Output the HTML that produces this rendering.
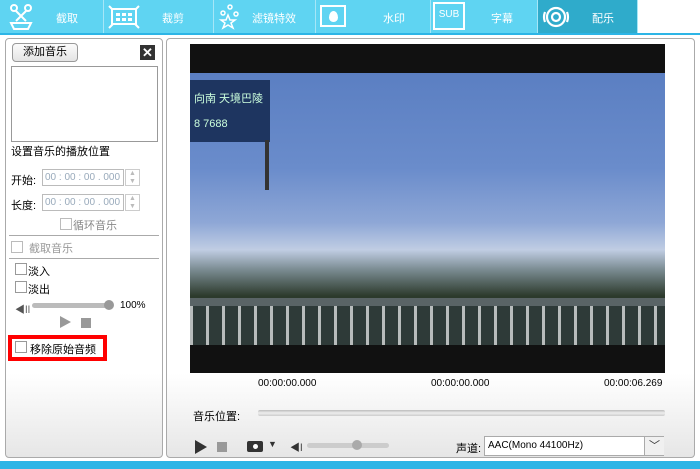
<!DOCTYPE html><html><head><meta charset="utf-8"><style>
*{margin:0;padding:0;box-sizing:border-box}
body{width:700px;height:469px;background:#fff;position:relative;overflow:hidden;font-family:"Liberation Sans","Noto Sans CJK SC",sans-serif;font-size:11px;color:#000}
.a{position:absolute}
.tab{position:absolute;top:0;height:33px;background:#5fd4f2;color:#fff;font-size:11px;border-right:1px solid #a6e6f7}
.tab span{position:absolute;top:10px}
.cb{position:absolute;width:12px;height:12px;border:1px solid #999;background:#fff}
.panel{position:absolute;border:1px solid #aaa;border-radius:4px;background:linear-gradient(#fff 0,#fff 80%,#e6e6e6 100%)}
.inp{position:absolute;height:17px;border:1px solid #bbb;background:#fff;color:#9ab;font-size:10px;padding:2px 2px}
</style></head><body>
<div class="tab" style="left:0;width:104px"><svg class="a" style="left:8px;top:3px" width="26" height="28"><g stroke="#fff" stroke-width="2" fill="none"><circle cx="6" cy="5" r="3"/><circle cx="20" cy="5" r="3"/><path d="M8 8L18 18M18 8L8 18"/><path d="M3 20h20l-3 6H6z"/></g></svg><span style="left:56px">截取</span></div>
<div class="tab" style="left:104px;width:110px"><svg class="a" style="left:4px;top:4px" width="32" height="26"><g stroke="#fff" stroke-width="2" fill="none"><rect x="4" y="5" width="24" height="15"/><path d="M1 2l4 4M31 2l-4 4M1 24l4-4M31 24l-4-4"/></g><g fill="#fff"><rect x="8" y="9" width="4" height="3"/><rect x="14" y="9" width="4" height="3"/><rect x="20" y="9" width="4" height="3"/><rect x="8" y="14" width="4" height="3"/><rect x="14" y="14" width="4" height="3"/><rect x="20" y="14" width="4" height="3"/></g></svg><span style="left:58px">裁剪</span></div>
<div class="tab" style="left:214px;width:102px"><svg class="a" style="left:4px;top:3px" width="22" height="27"><g stroke="#fff" stroke-width="1.5" fill="none"><path d="M10 12l2 5 5 0-4 3 2 5-5-3-5 3 2-5-4-3 5 0z"/><circle cx="5" cy="10" r="2"/><circle cx="12" cy="4" r="2"/><circle cx="18" cy="11" r="2"/></g></svg><span style="left:38px">滤镜特效</span></div>
<div class="tab" style="left:316px;width:115px"><div class="a" style="left:4px;top:5px;width:26px;height:22px;border:2px solid #fff"></div><div class="a" style="left:13px;top:11px;width:9px;height:11px;background:#fff;border-radius:50% 50% 50% 50%/60% 60% 40% 40%"></div><span style="left:67px">水印</span></div>
<div class="tab" style="left:431px;width:107px"><div class="a" style="left:2px;top:2px;width:32px;height:28px;border:2px solid #fff;color:#fff;font-size:10px;text-align:center;line-height:22px">SUB</div><span style="left:60px">字幕</span></div>
<div class="tab" style="left:538px;width:100px;background:#2fabcb"><svg class="a" style="left:4px;top:4px" width="28" height="26"><g stroke="#fff" stroke-width="2.2" fill="none"><circle cx="14" cy="13" r="9"/><circle cx="14" cy="13" r="4"/><path d="M3 8q-2 5 0 10M25 8q2 5 0 10"/></g></svg><span style="left:54px">配乐</span></div>
<div class="a" style="left:0;top:33px;width:700px;height:2px;background:#2db5e6"></div>
<div class="a" style="left:0;top:461px;width:700px;height:8px;background:#2db5e6"></div>

<div class="panel" style="left:5px;top:38px;width:158px;height:420px"></div>
<div class="a" style="left:12px;top:43px;width:66px;height:19px;border:1px solid #999;border-radius:4px;background:linear-gradient(#fbfbfb,#e4e4e4);text-align:center;line-height:17px">添加音乐</div>
<div class="a" style="left:140px;top:45px;width:15px;height:15px;background:#333;color:#fff;font-weight:bold;text-align:center;line-height:15px;font-size:13px">✕</div>
<div class="a" style="left:11px;top:66px;width:147px;height:76px;border:1px solid #999;background:#fff"></div>
<div class="a" style="left:11px;top:143px">设置音乐的播放位置</div>
<div class="a" style="left:11px;top:172px">开始:</div>
<div class="inp" style="left:42px;top:169px;width:82px">00 : 00 : 00 . 000</div>
<div class="a" style="left:125px;top:169px;width:15px;height:17px;border:1px solid #ccc;color:#bbb;font-size:7px;text-align:center;line-height:8px">▲<br>▼</div>
<div class="a" style="left:11px;top:197px">长度:</div>
<div class="inp" style="left:42px;top:194px;width:82px">00 : 00 : 00 . 000</div>
<div class="a" style="left:125px;top:194px;width:15px;height:17px;border:1px solid #ccc;color:#bbb;font-size:7px;text-align:center;line-height:8px">▲<br>▼</div>
<div class="cb" style="left:60px;top:218px;border-color:#bbb"></div><div class="a" style="left:73px;top:217px;color:#888">循环音乐</div>
<div class="a" style="left:9px;top:235px;width:150px;height:1px;background:#aaa"></div>
<div class="cb" style="left:11px;top:241px;border-color:#bbb"></div><div class="a" style="left:29px;top:240px;color:#999">截取音乐</div>
<div class="a" style="left:9px;top:258px;width:150px;height:1px;background:#aaa"></div>
<div class="cb" style="left:15px;top:263px"></div><div class="a" style="left:28px;top:263px">淡入</div>
<div class="cb" style="left:15px;top:281px"></div><div class="a" style="left:28px;top:281px">淡出</div>
<div class="a" style="left:15px;top:301px;color:#555;font-size:10px">◀ǀǀ</div>
<div class="a" style="left:32px;top:303px;width:80px;height:5px;border-radius:3px;background:#bbb"></div>
<div class="a" style="left:104px;top:300px;width:10px;height:10px;border-radius:50%;background:#999"></div>
<div class="a" style="left:120px;top:300px;font-size:10px">100%</div>
<div class="a" style="left:60px;top:316px;width:0;height:0;border-left:11px solid #999;border-top:6px solid transparent;border-bottom:6px solid transparent"></div>
<div class="a" style="left:81px;top:318px;width:10px;height:10px;background:#999"></div>
<div class="a" style="left:8px;top:335px;width:99px;height:26px;border:4px solid #f00"></div>
<div class="cb" style="left:15px;top:341px"></div><div class="a" style="left:30px;top:341px">移除原始音频</div>

<div class="panel" style="left:166px;top:38px;width:529px;height:420px"></div>
<div class="a" style="left:190px;top:44px;width:475px;height:329px;background:#111"></div>
<div class="a" style="left:190px;top:73px;width:475px;height:272px;background:linear-gradient(#5b7fc2 0%,#6a8ccb 35%,#8ea7d6 55%,#c0cde3 65%,#7d8e95 72%,#2c3a2c 82%,#26302a 100%)"></div>
<div class="a" style="left:190px;top:80px;width:80px;height:62px;background:#1e3560;color:#cfd;font-size:11px;padding:10px 4px;white-space:nowrap">向南 天境巴陵<br><br>8 7688</div>
<div class="a" style="left:265px;top:140px;width:4px;height:50px;background:#333"></div>
<div class="a" style="left:190px;top:305px;width:475px;height:40px;background:repeating-linear-gradient(90deg,#b8bcbc 0 3px,#2e3a38 3px 16px)"></div>
<div class="a" style="left:190px;top:298px;width:475px;height:8px;background:#5a6466"></div>
<div class="a" style="left:258px;top:378px;font-size:10px">00:00:00.000</div>
<div class="a" style="left:431px;top:378px;font-size:10px">00:00:00.000</div>
<div class="a" style="left:604px;top:378px;font-size:10px">00:00:06.269</div>
<div class="a" style="left:193px;top:408px">音乐位置:</div>
<div class="a" style="left:258px;top:410px;width:407px;height:6px;border-radius:2px;background:linear-gradient(#bbb,#eee,#ccc)"></div>
<div class="a" style="left:195px;top:440px;width:0;height:0;border-left:12px solid #333;border-top:7px solid transparent;border-bottom:7px solid transparent"></div>
<div class="a" style="left:217px;top:442px;width:10px;height:10px;background:#999"></div>
<div class="a" style="left:247px;top:441px;width:16px;height:11px;background:#333;border-radius:2px"></div>
<div class="a" style="left:253px;top:444px;width:5px;height:5px;background:#fff;border-radius:50%"></div>
<div class="a" style="left:268px;top:439px;font-size:9px;color:#333">▼</div>
<div class="a" style="left:290px;top:439px;font-size:10px;color:#333">◀ǀ</div>
<div class="a" style="left:307px;top:443px;width:82px;height:5px;border-radius:3px;background:#ccc"></div>
<div class="a" style="left:352px;top:440px;width:10px;height:10px;border-radius:50%;background:#aaa"></div>
<div class="a" style="left:456px;top:440px">声道:</div>
<div class="a" style="left:484px;top:436px;width:180px;height:20px;border:1px solid #aaa;background:#fff;font-size:10px;padding:3px 3px">AAC(Mono 44100Hz)</div>
<div class="a" style="left:644px;top:437px;width:20px;height:18px;border-left:1px solid #aaa;background:#f0f0f0;text-align:center;color:#333;font-size:11px;line-height:18px">﹀</div>
</body></html>
